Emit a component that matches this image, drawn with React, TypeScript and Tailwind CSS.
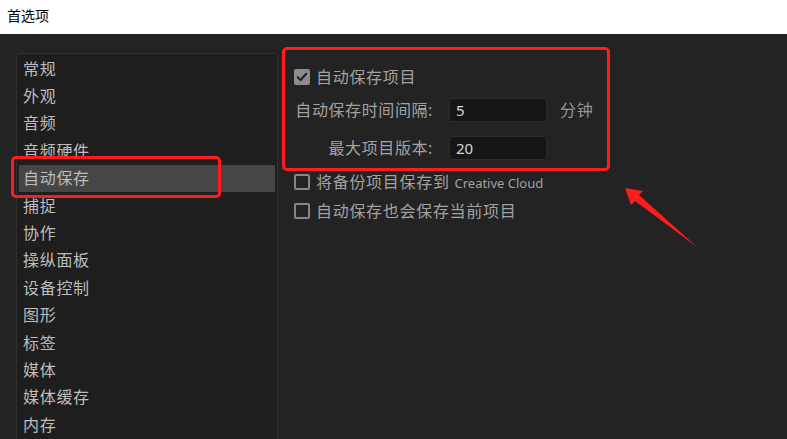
import React from "react";

const ITEMS = ["常规", "外观", "音频", "音频硬件", "自动保存", "捕捉", "协作", "操纵面板", "设备控制", "图形", "标签", "媒体", "媒体缓存", "内存"];

const FONT = "font-['Noto_Sans','Noto_Sans_CJK_SC',sans-serif]";

function Check({ checked, children }: { checked?: boolean; children: React.ReactNode }) {
  return (
    <div className="flex items-center gap-[6px] h-[17px]">
      {checked ? (
        <div className="w-[16px] h-[16px] rounded-[2px] bg-[#8c8c8c] flex items-center justify-center">
          <svg width="12" height="12" viewBox="0 0 12 12">
            <path d="M1.8 6.3 L4.6 9 L10.2 2.8" fill="none" stroke="#232323" strokeWidth="2.2" strokeLinecap="round" strokeLinejoin="round" />
          </svg>
        </div>
      ) : (
        <div className="w-[16px] h-[16px] rounded-[2px] border-2 border-[#858585]" />
      )}
      <span className="text-[16px] tracking-[0.7px] text-[#a2a2a2] leading-none whitespace-nowrap">{children}</span>
    </div>
  );
}

export default function App() {
  return (
    <div className={`w-[787px] h-[439px] overflow-hidden relative bg-[#232323] ${FONT}`}>
      <div className="h-[34px] bg-white flex items-center pl-[7px] pb-[3px] text-[14px] text-black">首选项</div>

      <div className="flex pt-[19px]">
        {/* category list */}
        <div className="ml-[16px] w-[262px] h-[400px] shrink-0 bg-[#1e1e1e] border border-[#303030] rounded-[3px] px-[2px] pt-[1px]">
          {ITEMS.map((it) => (
            <div
              key={it}
              className={`h-[27.4px] flex items-center pl-[4px] text-[16px] tracking-[0.7px] leading-none text-[#bdbdbd] ${it === "自动保存" ? "bg-[#464646]" : ""}`}
            >
              {it}
            </div>
          ))}
        </div>

        {/* settings */}
        <div className="pl-[16px] pt-[15px] flex flex-col">
          <Check checked>自动保存项目</Check>
          <div className="flex items-center mt-[13px]">
            <div className="w-[139px] text-right whitespace-nowrap text-[16px] tracking-[0.6px] text-[#a2a2a2] leading-none">自动保存时间间隔:</div>
            <div className="ml-[16px] w-[98px] h-[24px] bg-[#161616] border border-[#2b2b2b] rounded-[3px] flex items-center pl-[6px] text-[15px] text-[#d6d6d6]">5</div>
            <div className="ml-[13px] text-[16px] tracking-[0.7px] text-[#969696] leading-none">分钟</div>
          </div>
          <div className="flex items-center mt-[14px]">
            <div className="w-[139px] text-right whitespace-nowrap text-[16px] tracking-[0.6px] text-[#a2a2a2] leading-none">最大项目版本:</div>
            <div className="ml-[16px] w-[98px] h-[24px] bg-[#161616] border border-[#2b2b2b] rounded-[3px] flex items-center pl-[6px] text-[15px] text-[#d6d6d6]">20</div>
          </div>
          <div className="mt-[13px] flex flex-col gap-[12px]">
            <Check>
              将备份项目保存到 <span className="text-[13px] tracking-normal">Creative Cloud</span>
            </Check>
            <Check>自动保存也会保存当前项目</Check>
          </div>
        </div>
      </div>

      {/* red annotations */}
      <div className="absolute left-[11px] top-[156px] w-[210px] h-[42px] border-[3px] border-[#ff1c1c] rounded-[5px] pointer-events-none" />
      <div className="absolute left-[282px] top-[47px] w-[328px] h-[124px] border-[3px] border-[#ff1c1c] rounded-[5px] pointer-events-none" />
      <svg className="absolute left-0 top-0 pointer-events-none" width="787" height="439">
        <polygon points="625,188 643,191 639,195 697,247 635,201 631,205" fill="#ff1c1c" />
      </svg>
    </div>
  );
}
